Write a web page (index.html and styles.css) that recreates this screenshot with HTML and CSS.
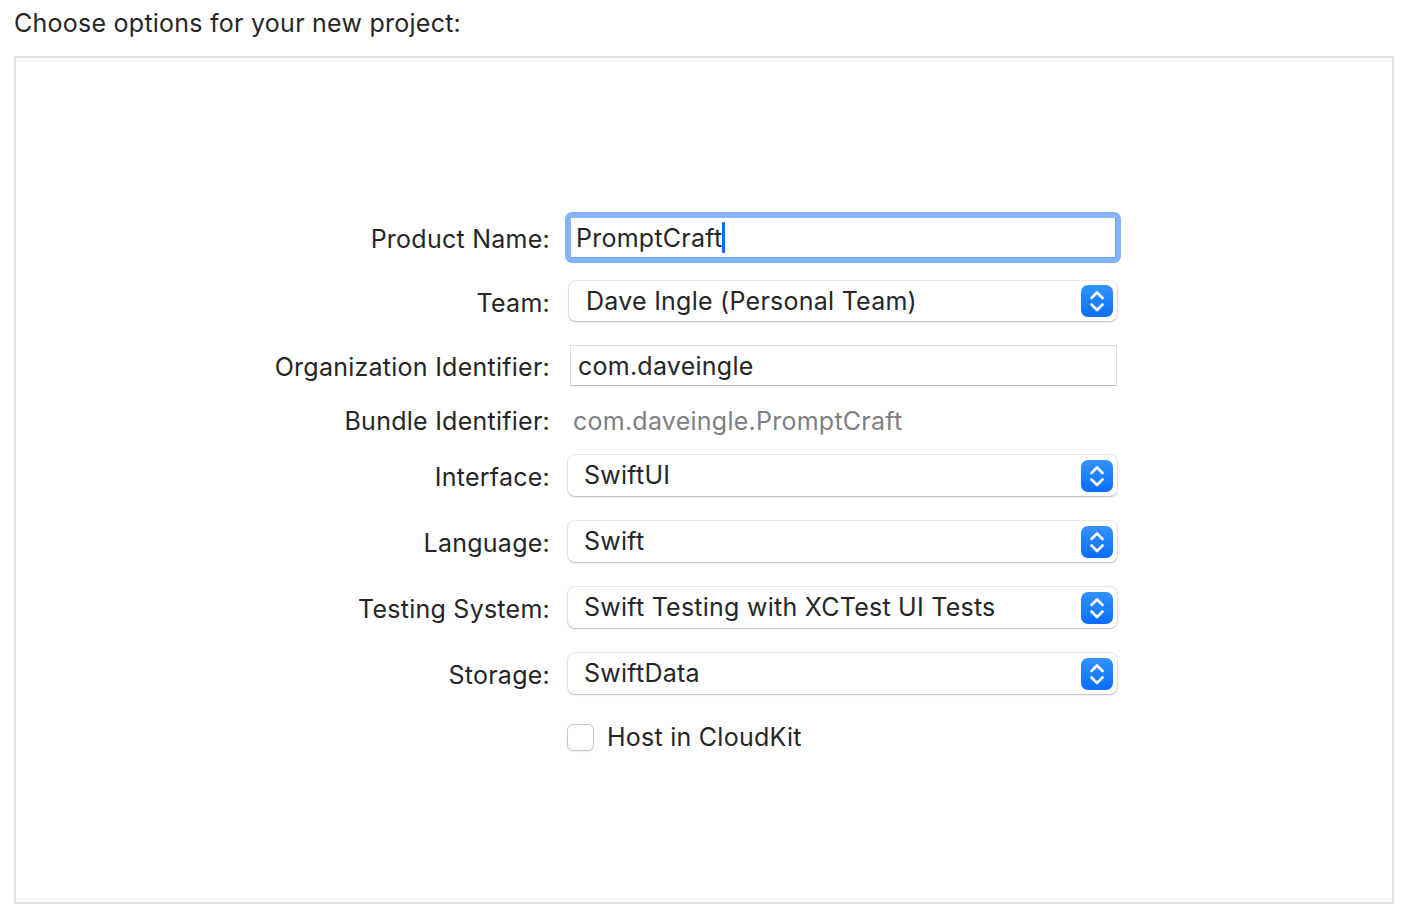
FILE: index.html
```html
<!DOCTYPE html>
<html>
<head>
<meta charset="utf-8">
<link rel="stylesheet" href="styles.css">
</head>
<body>
<div class="page">
  <div class="title">Choose options for your new project:</div>
  <div class="panel">
    <div class="form">
      <div class="row r-product">
        <div class="label">Product Name:</div>
        <div class="focus-ring"><div class="input focused"><span>PromptCraft</span><span class="caret"></span></div></div>
      </div>
      <div class="row r-team">
        <div class="label">Team:</div>
        <div class="popup"><span class="ptext t-team">Dave Ingle (Personal Team)</span><span class="stepper"><svg width="32" height="32" viewBox="0 0 32 32"><path d="M10.5 13 L16 7.5 L21.5 13" fill="none" stroke="#fff" stroke-width="2.6" stroke-linecap="round" stroke-linejoin="round"/><path d="M10.5 19.5 L16 25 L21.5 19.5" fill="none" stroke="#fff" stroke-width="2.6" stroke-linecap="round" stroke-linejoin="round"/></svg></span></div>
      </div>
      <div class="row r-org">
        <div class="label">Organization Identifier:</div>
        <div class="textfield">com.daveingle</div>
      </div>
      <div class="row r-bundle">
        <div class="label">Bundle Identifier:</div>
        <div class="static">com.daveingle.PromptCraft</div>
      </div>
      <div class="row r-pop r-interface">
        <div class="label">Interface:</div>
        <div class="popup"><span class="ptext">SwiftUI</span><span class="stepper"><svg width="32" height="32" viewBox="0 0 32 32"><path d="M10.5 13 L16 7.5 L21.5 13" fill="none" stroke="#fff" stroke-width="2.6" stroke-linecap="round" stroke-linejoin="round"/><path d="M10.5 19.5 L16 25 L21.5 19.5" fill="none" stroke="#fff" stroke-width="2.6" stroke-linecap="round" stroke-linejoin="round"/></svg></span></div>
      </div>
      <div class="row r-pop">
        <div class="label">Language:</div>
        <div class="popup"><span class="ptext">Swift</span><span class="stepper"><svg width="32" height="32" viewBox="0 0 32 32"><path d="M10.5 13 L16 7.5 L21.5 13" fill="none" stroke="#fff" stroke-width="2.6" stroke-linecap="round" stroke-linejoin="round"/><path d="M10.5 19.5 L16 25 L21.5 19.5" fill="none" stroke="#fff" stroke-width="2.6" stroke-linecap="round" stroke-linejoin="round"/></svg></span></div>
      </div>
      <div class="row r-pop">
        <div class="label">Testing System:</div>
        <div class="popup"><span class="ptext">Swift Testing with XCTest UI Tests</span><span class="stepper"><svg width="32" height="32" viewBox="0 0 32 32"><path d="M10.5 13 L16 7.5 L21.5 13" fill="none" stroke="#fff" stroke-width="2.6" stroke-linecap="round" stroke-linejoin="round"/><path d="M10.5 19.5 L16 25 L21.5 19.5" fill="none" stroke="#fff" stroke-width="2.6" stroke-linecap="round" stroke-linejoin="round"/></svg></span></div>
      </div>
      <div class="row r-pop">
        <div class="label">Storage:</div>
        <div class="popup"><span class="ptext">SwiftData</span><span class="stepper"><svg width="32" height="32" viewBox="0 0 32 32"><path d="M10.5 13 L16 7.5 L21.5 13" fill="none" stroke="#fff" stroke-width="2.6" stroke-linecap="round" stroke-linejoin="round"/><path d="M10.5 19.5 L16 25 L21.5 19.5" fill="none" stroke="#fff" stroke-width="2.6" stroke-linecap="round" stroke-linejoin="round"/></svg></span></div>
      </div>
      <div class="row r-check">
        <div class="label"></div>
        <div class="check-wrap"><span class="checkbox"></span><span class="check-label">Host in CloudKit</span></div>
      </div>
    </div>
  </div>
</div>
</body>
</html>
```
FILE: styles.css
```css
html, body {
  margin: 0;
  padding: 0;
  background: #ffffff;
}
body {
  font-family: Inter, "Noto Sans", "Liberation Sans", sans-serif;
  color: #262626;
  font-size: 25px;
  letter-spacing: 0.25px;
}
.page {
  width: 1409px;
  height: 920px;
  overflow: hidden;
}
.title {
  height: 46px;
  line-height: 46px;
  padding-left: 14px;
}
.panel {
  margin-left: 14px;
  margin-top: 10px;
  width: 1376px;
  height: 844px;
  border: 2px solid #e3e3e3;
}
.form {
  padding-top: 154px;
  display: flex;
  flex-direction: column;
}
.row {
  display: grid;
  grid-template-columns: 535px 1fr;
  column-gap: 15px;
  align-items: center;
}
.label {
  text-align: right;
  padding-top: 3px;
  margin-right: 1px;
}
.r-product { height: 51px; }
.r-team { height: 40px; margin-top: 18px; }
.r-org { height: 41px; margin-top: 24px; }
.r-bundle { height: 30px; margin-top: 20px; }
.r-bundle .label { padding-top: 0; }
.r-pop { height: 41px; margin-top: 25px; }
.r-interface { margin-top: 19px; }
.r-check { height: 27px; margin-top: 28px; }

.focus-ring {
  width: 546px;
  height: 41px;
  padding: 5px;
  margin-left: -1px;
  border-radius: 7px;
  background: #83b4f9;
}
.input {
  height: 39px;
  background: #fff;
  border: 1px solid #6a9fee;
  border-top-color: #8fbaf7;
  border-left-color: #8fbaf7;
  display: flex;
  align-items: center;
  padding-left: 5px;
}
.caret {
  display: inline-block;
  width: 3px;
  height: 31px;
  background: #0a6cff;
  border-radius: 1px;
}
.popup {
  width: 548px;
  height: 40px;
  box-sizing: border-box;
  margin-left: 3px;
  background: #fff;
  border-radius: 7px;
  box-shadow: 0 0 0 1px rgba(0,0,0,0.07), 0 1px 2px rgba(0,0,0,0.22);
  display: flex;
  align-items: center;
  justify-content: space-between;
  padding-left: 16px;
  padding-right: 4px;
}
.r-pop .popup { height: 41px; width: 549px; margin-left: 2px; }
.ptext { padding-bottom: 2px; }
.t-team { padding-left: 1px; padding-bottom: 1px; }
.stepper {
  width: 32px;
  height: 32px;
  border-radius: 7px;
  background: linear-gradient(#3393ff, #0a6dfd);
  display: flex;
}
.textfield {
  margin-left: 4px;
  width: 547px;
  height: 41px;
  box-sizing: border-box;
  border: 1px solid #dedede;
  border-bottom-color: #bdbdbd;
  padding-left: 7px;
  display: flex;
  align-items: center;
}
.static {
  margin-left: 7px;
  color: #808080;
}
.check-wrap {
  display: flex;
  align-items: center;
  gap: 13px;
  margin-left: 1px;
}
.checkbox {
  width: 27px;
  height: 27px;
  box-sizing: border-box;
  border: 1px solid #c9c9c9;
  border-radius: 6px;
  background: #fff;
  box-shadow: 0 0.5px 1px rgba(0,0,0,0.08);
}
```
